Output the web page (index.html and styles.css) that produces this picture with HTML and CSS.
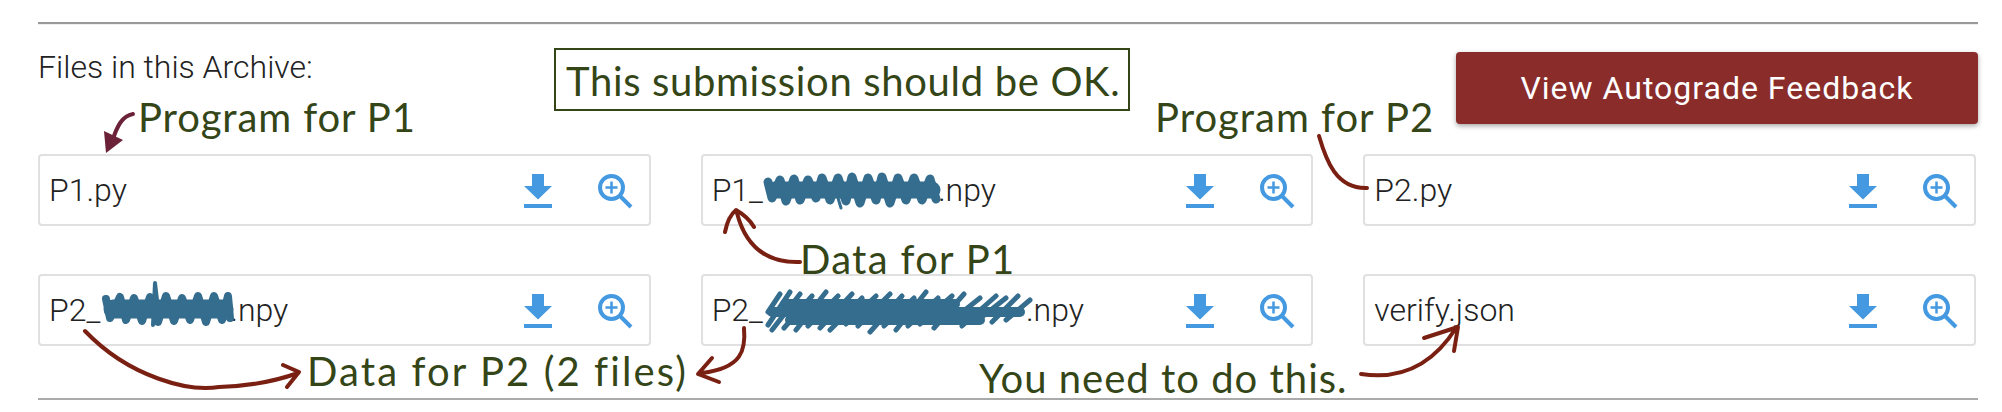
FILE: index.html
```html
<!DOCTYPE html>
<html lang="en">
<head>
<meta charset="utf-8">
<title>Files in this Archive</title>
<link rel="stylesheet" href="styles.css">
</head>
<body>
<main class="page">
  <hr class="rule rule-top">
  <header class="head">
    <div class="title">Files in this Archive:</div>
    <div class="callout">This submission should be OK.</div>
    <button class="feedback">View Autograde Feedback</button>
  </header>
  <section class="files">
    <div class="file"><span class="name">P1.py</span><svg class="dl" viewBox="0 0 28 34"><use href="#i-dl"/></svg><svg class="zoom" viewBox="0 0 35 35"><use href="#i-zoom"/></svg></div>
    <div class="file"><span class="name">P1_<i class="hide hide-a"></i>.npy</span><svg class="dl" viewBox="0 0 28 34"><use href="#i-dl"/></svg><svg class="zoom" viewBox="0 0 35 35"><use href="#i-zoom"/></svg></div>
    <div class="file"><span class="name">P2.py</span><svg class="dl" viewBox="0 0 28 34"><use href="#i-dl"/></svg><svg class="zoom" viewBox="0 0 35 35"><use href="#i-zoom"/></svg></div>
    <div class="file"><span class="name">P2_<i class="hide hide-b"></i>.npy</span><svg class="dl" viewBox="0 0 28 34"><use href="#i-dl"/></svg><svg class="zoom" viewBox="0 0 35 35"><use href="#i-zoom"/></svg></div>
    <div class="file"><span class="name">P2_<i class="hide hide-c"></i>.npy</span><svg class="dl" viewBox="0 0 28 34"><use href="#i-dl"/></svg><svg class="zoom" viewBox="0 0 35 35"><use href="#i-zoom"/></svg></div>
    <div class="file"><span class="name">verify.json</span><svg class="dl" viewBox="0 0 28 34"><use href="#i-dl"/></svg><svg class="zoom" viewBox="0 0 35 35"><use href="#i-zoom"/></svg></div>
  </section>
  <hr class="rule rule-bottom">

  <svg class="defs" width="0" height="0">
    <defs>
      <g id="i-dl"><path d="M8 0h12v12h8L14 25.500 0 12h8zM0 30h28v4H0z" fill="#4499e0"/></g>
      <g id="i-zoom" fill="none" stroke="#4499e0"><circle cx="13.500" cy="13.500" r="11.500" stroke-width="4"/><path d="M22 22l11 11" stroke-width="4"/><path d="M13.500 7.500v12M7.500 13.500h12" stroke-width="2.500"/></g>
    </defs>
  </svg>

  <svg class="ink" viewBox="0 0 2002 412" width="2002" height="412" fill="none">
    <g stroke="#356d8f" stroke-linecap="round" stroke-linejoin="round">
      <path stroke-width="9" d="M768 182L772 198L780 180L786 201L794 179L800 200L808 180L816 198L822 178L830 200L838 178L846 201L852 177L860 203L868 178L876 200L882 177L890 203L898 178L906 200L914 178L922 200L930 179L936 199"/>
      <path stroke-width="17" d="M775 190H932"/>
      <path stroke-width="3" d="M838 198L841 208"/>
      <path stroke-width="8" d="M106 299L110 318L120 297L126 320L134 298L142 321L150 297L158 322L166 296L174 321L182 298L190 320L198 296L206 322L214 296L222 320L228 296L230 318"/>
      <path stroke-width="19" d="M113 309H224"/>
      <path stroke-width="4" d="M153 325L155 283L157 300"/>
      <path stroke-width="5" d="M768 312L780 294M768 325L790 292M772 330L800 294M784 328L812 296M796 330L826 292M808 326L838 296M820 328L852 294M830 330L862 298M846 324L876 296M858 326L890 294M870 332L902 296M884 326L914 298M896 330L926 292M908 326L938 298M920 324L952 296M934 328L964 294M950 322L980 298M962 326L996 296M978 320L1006 298M992 322L1018 296M1006 320L1030 300"/>
      <path stroke-width="10" d="M772 312H1020M785 304H955M790 320H980"/>
    </g>
    <g stroke="#7a2012" stroke-width="4" stroke-linecap="round" stroke-linejoin="round">
      <path d="M1319 136C1326 160 1336 189 1367 188"/>
      <path d="M800 262C768 263 746 248 737 213M725 232C727 222 731 214 736 210C743 214 750 220 754 227"/>
      <path d="M85 331C130 378 190 392 219 387C250 386 276 381 298 373M283 365L299 372L287 387"/>
      <path d="M744 328C746 350 742 368 702 373M712 358L698 374L719 382"/>
      <path d="M1361 374C1400 380 1432 366 1456 328M1424 338L1458 327L1454 351"/>
    </g>
    <path d="M133 114C122 116 117 126 112 142" stroke="#6b2238" stroke-width="4" stroke-linecap="round"/>
    <path d="M104 131L123 140L106 153Z" fill="#6b2238"/>
  </svg>

  <span class="note note-p1">Program for P1</span>
  <span class="note note-p2">Program for P2</span>
  <span class="note note-d1">Data for P1</span>
  <span class="note note-d2">Data for P2 (2 files)</span>
  <span class="note note-you">You need to do this.</span>
</main>
</body>
</html>
```
FILE: styles.css
```css
html, body {
  margin: 0;
  padding: 0;
  background: #fff;
}

.page {
  position: relative;
  width: 2002px;
  height: 412px;
  padding: 22px 24px 0 38px;
  box-sizing: border-box;
  overflow: hidden;
  font-family: Roboto, "Liberation Sans", sans-serif;
  font-weight: 300;
  color: #222;
}

.rule {
  margin: 0;
  border: 0;
  height: 2px;
}

.rule-top {
  background: #999;
  border-bottom: 1px solid #eee;
}

.rule-bottom {
  margin-top: 52px;
  background: #aaa;
}

.head {
  display: grid;
  grid-template-columns: 516px 576px 1fr;
  align-items: start;
  margin-top: 23px;
  height: 106px;
}

.title {
  font-size: 32px;
  line-height: 38px;
}

.callout {
  box-sizing: border-box;
  height: 63px;
  border: 2px solid #344517;
  padding-left: 10px;
  font-family: Lato, sans-serif;
  font-weight: 400;
  font-size: 40px;
  letter-spacing: .66px;
  line-height: 63px;
  color: #344517;
  white-space: nowrap;
}

.feedback {
  justify-self: end;
  width: 522px;
  height: 72px;
  margin-top: 4px;
  border: 0;
  border-radius: 4px;
  background: #8a2d2a;
  box-shadow: 0 2px 5px rgba(0, 0, 0, .35);
  color: #fff;
  font-family: Roboto, sans-serif;
  font-weight: 400;
  font-size: 32px;
  letter-spacing: 1px;
}

.files {
  display: grid;
  grid-template-columns: repeat(3, 1fr);
  gap: 48px 50px;
  width: 1938px;
}

.file {
  box-sizing: border-box;
  height: 72px;
  display: flex;
  align-items: center;
  padding: 0 16px 0 9px;
  border: 2px solid #e0e0e0;
  border-radius: 4px;
}

.name {
  font-size: 32px;
  line-height: 38px;
  white-space: nowrap;
}

.hide {
  display: inline-block;
}

.hide-a { width: 175px; }
.hide-b { width: 130px; }
.hide-c { width: 263px; }

.dl {
  width: 28px;
  height: 34px;
  margin-top: 2px;
  margin-left: auto;
}

.zoom {
  width: 35px;
  height: 35px;
  margin-top: 2px;
  margin-left: 46px;
}

.defs {
  position: absolute;
}

.ink {
  position: absolute;
  left: 0;
  top: 0;
  pointer-events: none;
}

.note {
  position: absolute;
  font-family: Lato, sans-serif;
  font-weight: 400;
  font-size: 40px;
  line-height: 48px;
  color: #344517;
  white-space: nowrap;
}

.note-p1 { left: 138px; top: 93px; letter-spacing: .9px; }
.note-p2 { left: 1155px; top: 93px; letter-spacing: 1px; }
.note-d1 { left: 800px; top: 235px; letter-spacing: 1.3px; }
.note-d2 { left: 307px; top: 347px; letter-spacing: 2.1px; }
.note-you { left: 979px; top: 354px; letter-spacing: 1px; }
```
